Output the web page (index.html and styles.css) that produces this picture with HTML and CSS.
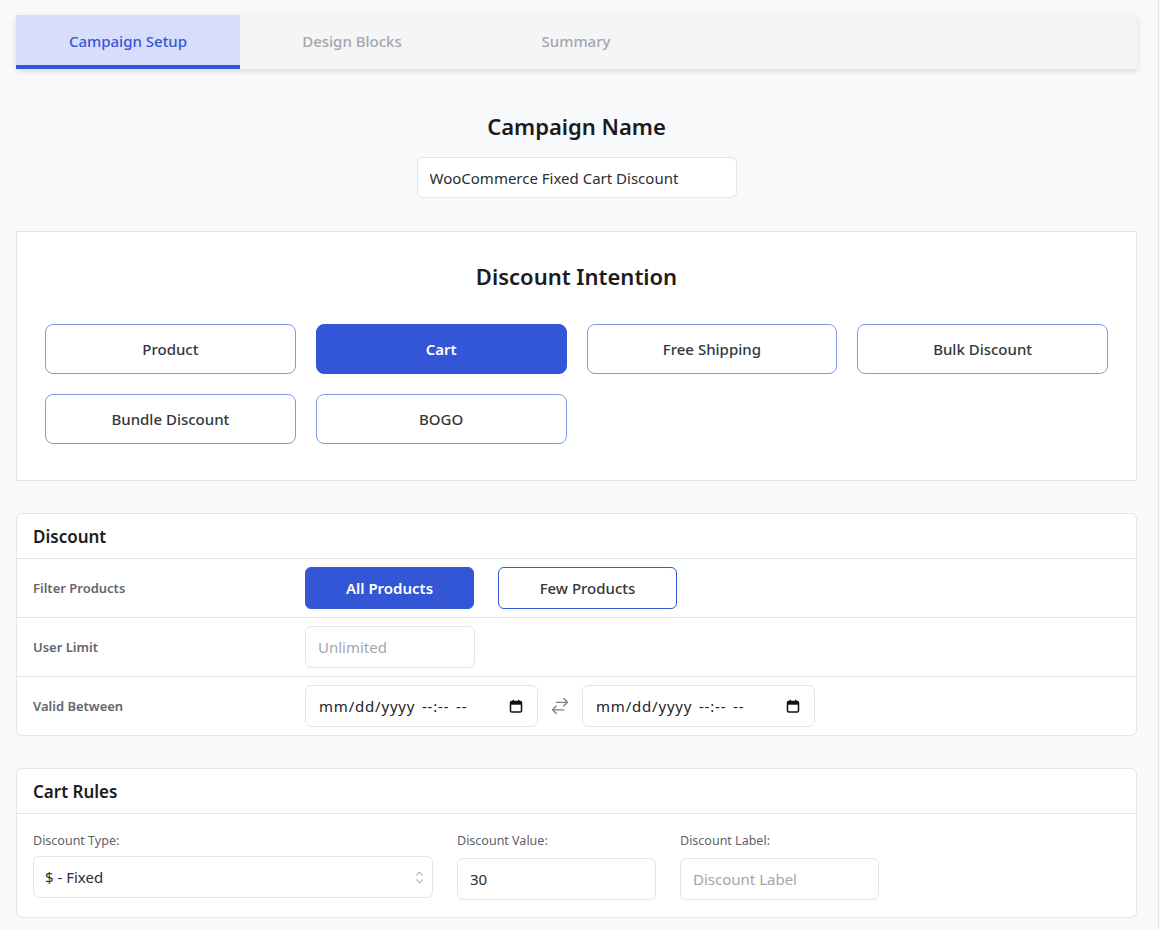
FILE: index.html
```html
<!DOCTYPE html>
<html lang="en">
<head>
<meta charset="utf-8">
<title>Campaign Setup</title>
<link rel="stylesheet" href="styles.css">
</head>
<body>
<div class="page">
  <nav class="tabs">
    <div class="tab active">Campaign Setup</div>
    <div class="tab">Design Blocks</div>
    <div class="tab">Summary</div>
  </nav>

  <section class="campaign">
    <h2 class="big-title">Campaign Name</h2>
    <input class="field name-field" type="text" value="WooCommerce Fixed Cart Discount">
  </section>

  <section class="intent-card">
    <h2 class="big-title">Discount Intention</h2>
    <div class="intent-grid">
      <button class="intent">Product</button>
      <button class="intent selected">Cart</button>
      <button class="intent">Free Shipping</button>
      <button class="intent">Bulk Discount</button>
      <button class="intent">Bundle Discount</button>
      <button class="intent">BOGO</button>
    </div>
  </section>

  <section class="panel">
    <div class="panel-head">Discount</div>
    <div class="row">
      <div class="row-label">Filter Products</div>
      <div class="row-ctrl">
        <button class="pill filled">All Products</button>
        <button class="pill outline">Few Products</button>
      </div>
    </div>
    <div class="row">
      <div class="row-label">User Limit</div>
      <div class="row-ctrl">
        <input class="field limit-field" type="text" placeholder="Unlimited">
      </div>
    </div>
    <div class="row">
      <div class="row-label">Valid Between</div>
      <div class="row-ctrl dates">
        <div class="field date-field">
          <span class="date-text">mm/dd/yyyy --:-- --</span>
          <svg class="cal" viewBox="0 0 14 14" width="14" height="14"><rect x="1.5" y="2.5" width="11" height="10.5" rx="1.3" fill="none" stroke="#111" stroke-width="1.5"/><rect x="1.5" y="2.5" width="11" height="3.2" fill="#111"/><rect x="3.6" y="0.8" width="1.4" height="2.4" fill="#111"/><rect x="9" y="0.8" width="1.4" height="2.4" fill="#111"/></svg>
        </div>
        <svg class="swap" viewBox="0 0 24 24" width="20" height="20" fill="none" stroke="currentColor" stroke-width="1.5" stroke-linecap="round" stroke-linejoin="round"><path d="M7.5 21L3 16.5m0 0L7.5 12M3 16.5h13.5m0-13.5L21 7.5m0 0L16.5 12M21 7.5H7.5"/></svg>
        <div class="field date-field">
          <span class="date-text">mm/dd/yyyy --:-- --</span>
          <svg class="cal" viewBox="0 0 14 14" width="14" height="14"><rect x="1.5" y="2.5" width="11" height="10.5" rx="1.3" fill="none" stroke="#111" stroke-width="1.5"/><rect x="1.5" y="2.5" width="11" height="3.2" fill="#111"/><rect x="3.6" y="0.8" width="1.4" height="2.4" fill="#111"/><rect x="9" y="0.8" width="1.4" height="2.4" fill="#111"/></svg>
        </div>
      </div>
    </div>
  </section>

  <section class="panel">
    <div class="panel-head">Cart Rules</div>
    <div class="rules">
      <label class="rule wide">
        <span class="rule-label">Discount Type:</span>
        <span class="select-wrap">
          <select class="field select-field">
            <option>$ - Fixed</option>
            <option>% - Percentage</option>
          </select>
          <svg class="chev" viewBox="0 0 12 20" width="9" height="15" fill="none" stroke="currentColor" stroke-width="1.4" stroke-linecap="round" stroke-linejoin="round"><path d="M2 7l4-4 4 4M2 13l4 4 4-4"/></svg>
        </span>
      </label>
      <label class="rule">
        <span class="rule-label">Discount Value:</span>
        <input class="field rule-field" type="text" value="30">
      </label>
      <label class="rule">
        <span class="rule-label">Discount Label:</span>
        <input class="field rule-field" type="text" placeholder="Discount Label">
      </label>
    </div>
  </section>
</div>
</body>
</html>
```

FILE: styles.css
```css
* { box-sizing: border-box; }

html, body {
  margin: 0;
  padding: 0;
  background: #f8f9fb;
}

body {
  font-family: "Noto Sans", "Open Sans", Arial, sans-serif;
  color: #1f2328;
  height: 930px;
  overflow: hidden;
}

.page {
  width: 1159px;
  min-height: 930px;
  padding: 15px 21px 0 16px;
  border-right: 1px solid #e4e6ea;
}

/* Tabs */
.tabs {
  display: flex;
  height: 54px;
  background: #f5f5f5;
  box-shadow: 0 2px 6px rgba(0, 0, 0, 0.13);
}

.tab {
  width: 224px;
  display: flex;
  align-items: center;
  justify-content: center;
  font-size: 15px;
  font-weight: 500;
  color: #a3a6ad;
  padding-bottom: 2px;
}

.tab.active {
  background: #d6defb;
  color: #3557d6;
  border-bottom: 4px solid #3256d5;
  padding-bottom: 0;
  padding-top: 2px;
}

/* Campaign name */
.campaign {
  display: flex;
  flex-direction: column;
  align-items: center;
  padding-top: 42px;
}

.big-title {
  margin: 0;
  font-size: 22px;
  line-height: 30px;
  font-weight: 600;
  color: #1c1c1e;
  text-align: center;
}

.field {
  font-family: inherit;
  font-size: 15px;
  color: #2a2d33;
  background: #fff;
  border: 1px solid #e3e5e9;
  border-radius: 6px;
  height: 42px;
  padding: 0 12px;
  outline: none;
}

.field::placeholder { color: #a2a6ad; }

.name-field {
  margin-top: 16px;
  width: 320px;
  height: 41px;
}

/* Discount intention */
.intent-card {
  margin-top: 33px;
  background: #fff;
  border: 1px solid #e3e5e9;
  padding: 29px 28px 36px;
}

.intent-grid {
  margin-top: 33px;
  display: grid;
  grid-template-columns: repeat(4, 1fr);
  gap: 20px;
}

.intent {
  height: 50px;
  background: #fff;
  border: 1px solid #8299e6;
  border-radius: 8px;
  font-family: inherit;
  font-size: 15px;
  font-weight: 500;
  color: #33363b;
  cursor: pointer;
}

.intent.selected {
  background: #3256d5;
  border-color: #3256d5;
  color: #fff;
  font-weight: 600;
}

/* Panels */
.panel {
  margin-top: 32px;
  background: #fff;
  border: 1px solid #e3e5e9;
  border-radius: 6px;
}

.panel-head {
  height: 45px;
  display: flex;
  align-items: center;
  padding: 1px 16px 0;
  font-size: 17px;
  font-weight: 600;
  color: #1c1c1e;
  border-bottom: 1px solid #e3e5e9;
}

.row {
  box-sizing: content-box;
  display: grid;
  grid-template-columns: 272px 1fr;
  align-items: center;
  height: 58px;
  padding: 0 16px;
}

.row + .row { border-top: 1px solid #e3e5e9; }

.row-label {
  font-size: 13px;
  font-weight: 600;
  color: #62666d;
}

.row-ctrl {
  display: flex;
  align-items: center;
  gap: 24px;
}

.pill {
  height: 42px;
  border-radius: 6px;
  font-family: inherit;
  font-size: 15px;
  cursor: pointer;
}

.pill.filled {
  width: 169px;
  background: #3256d5;
  border: 1px solid #3256d5;
  color: #fff;
  font-weight: 600;
}

.pill.outline {
  width: 179px;
  background: #fff;
  border: 1.5px solid #3256d5;
  color: #33363b;
  font-weight: 500;
}

.limit-field { width: 170px; }

.dates { gap: 12px; }

.date-field {
  width: 233px;
  display: flex;
  align-items: center;
  justify-content: space-between;
  padding: 0 14px 0 13px;
}

.date-text {
  font-size: 15px;
  color: #1f2328;
  letter-spacing: 0.8px;
  word-spacing: 2px;
}

.cal { display: block; }

.swap { color: #7a7f87; }

/* Cart rules */
.rules {
  display: flex;
  gap: 24px;
  padding: 19px 16px 17px;
}

.rule {
  display: flex;
  flex-direction: column;
  width: 199px;
}

.rule.wide { width: 400px; }

.rule-label {
  font-size: 12.5px;
  line-height: 16px;
  color: #5d6168;
  margin-bottom: 7px;
}

.rule-field {
  width: 199px;
  margin-top: 2px;
}

.select-wrap {
  position: relative;
  display: block;
}

.select-field {
  width: 400px;
  -webkit-appearance: none;
  appearance: none;
  padding-left: 11px;
}

.chev {
  position: absolute;
  right: 9px;
  top: 14px;
  color: #9a9ea5;
  pointer-events: none;
}
```
